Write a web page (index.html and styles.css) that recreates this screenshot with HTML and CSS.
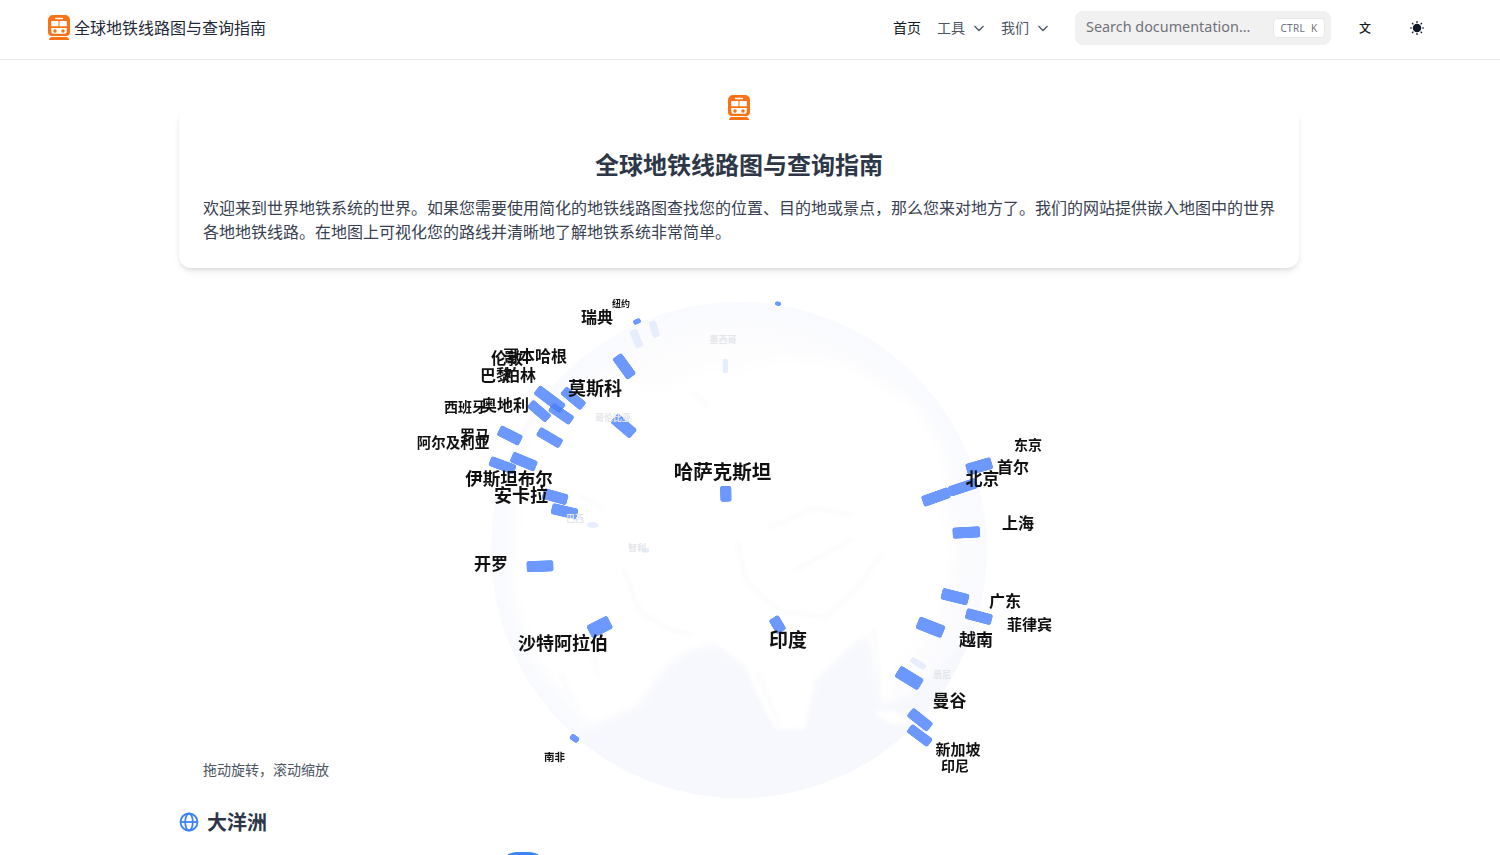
FILE: index.html
```html
<!DOCTYPE html>
<html lang="zh-CN">
<head>
<meta charset="utf-8">
<title>全球地铁线路图与查询指南</title>
<link rel="stylesheet" href="styles.css">
</head>
<body>
<svg class="defs" width="0" height="0" aria-hidden="true">
  <symbol id="train" viewBox="0 0 22 25">
    <path fill="#f97316" d="M5 0h12a5 5 0 0 1 5 5v12a4 4 0 0 1-4 4H4a4 4 0 0 1-4-4V5a5 5 0 0 1 5-5zM3 22h16l2 2v1H1v-1z"/>
    <path fill="#fff" d="M7 2.800h8v1.400H7zM3.200 6h7.300v5.200H3.200zM11.500 6h7.300v5.200h-7.300zM3.200 13h15.600v3.800a2 2 0 0 1-2 2H5.200a2 2 0 0 1-2-2z"/>
    <circle cx="7" cy="16" r="1.700" fill="#f97316"/>
    <circle cx="15" cy="16" r="1.700" fill="#f97316"/>
  </symbol>
</svg>

<header class="topbar">
  <a class="brand">
    <svg class="train"><use href="#train"/></svg>
    <span class="brand-name">全球地铁线路图与查询指南</span>
  </a>
  <div class="topbar-right">
    <nav class="nav">
      <a class="nav-link nav-active">首页</a>
      <a class="nav-link">工具<svg class="chev" viewBox="0 0 12 12"><path d="M1.500 4l4.500 4.500L10.500 4"/></svg></a>
      <a class="nav-link">我们<svg class="chev" viewBox="0 0 12 12"><path d="M1.500 4l4.500 4.500L10.500 4"/></svg></a>
    </nav>
    <div class="search">
      <span class="search-text">Search documentation...</span>
      <kbd class="kbd">CTRL<span class="kbd-k">K</span></kbd>
    </div>
    <button class="icon-btn lang">文</button>
    <button class="icon-btn">
      <svg class="sun" viewBox="0 0 16 16">
        <circle cx="8" cy="8" r="3.600"/>
        <path d="M8 1v2M8 13v2M1 8h2M13 8h2M3 3l1.400 1.400M11.600 11.600L13 13M3 13l1.400-1.400M11.600 4.400L13 3"/>
      </svg>
    </button>
  </div>
</header>

<main class="main">
  <section class="hero">
    <svg class="train hero-icon"><use href="#train"/></svg>
    <h1 class="hero-title">全球地铁线路图与查询指南</h1>
    <p class="hero-text">欢迎来到世界地铁系统的世界。如果您需要使用简化的地铁线路图查找您的位置、目的地或景点，那么您来对地方了。我们的网站提供嵌入地图中的世界各地地铁线路。在地图上可视化您的路线并清晰地了解地铁系统非常简单。</p>
  </section>

  <section class="stage">
    <svg class="globe" viewBox="179 268 1120 530" width="1120" height="530">
      <defs>
        <clipPath id="disc"><circle cx="739" cy="550" r="248"/></clipPath>
        <radialGradient id="rim" cx="50%" cy="50%" r="50%">
          <stop offset="0.820" stop-color="#fdfdfe"/>
          <stop offset="1" stop-color="#f9fafe"/>
        </radialGradient>
        <filter id="soft" x="-10%" y="-10%" width="120%" height="120%"><feGaussianBlur stdDeviation="18"/></filter>
        <filter id="edge" x="-10%" y="-10%" width="120%" height="120%"><feGaussianBlur stdDeviation="7"/></filter>
        <filter id="softer" x="-10%" y="-10%" width="120%" height="120%"><feGaussianBlur stdDeviation="6"/></filter>
        <filter id="round" filterUnits="userSpaceOnUse" x="179" y="268" width="1120" height="530">
          <feGaussianBlur stdDeviation="1.300"/>
          <feComponentTransfer><feFuncA type="linear" slope="5" intercept="-1.800"/></feComponentTransfer>
        </filter>
      </defs>

      <circle cx="739" cy="550" r="248" fill="url(#rim)"/>
      <g clip-path="url(#disc)">
        <g transform="translate(480 295) scale(.3333)">
          <path class="ocean" filter="url(#edge)" d="M330 1290L470 1230L540 1130L600 1075L700 1040L810 1110L850 1190L900 1290L960 1295L1000 1150L1130 1030L1170 1020L1210 1230L1290 1200L1340 1150L1500 1000L1500 1540L100 1540z"/>
          <path class="land" filter="url(#soft)" d="M150 400L260 290L420 240L530 290L690 210L760 230L900 190L1100 210L1300 330L1390 470L1400 560L1380 650L1420 760L1400 900L1350 1000L1280 1090L1240 1130L1210 1230L1170 1020L1130 1030L1000 1150L960 1290L900 1290L850 1190L810 1110L700 1040L600 1075L540 1130L470 1230L330 1290L290 1230L170 1100L100 900L110 650L120 500z"/>
          <path class="land" filter="url(#edge)" d="M330 1270L470 1215L530 1120L600 1065L700 1030L800 1110L830 1190L885 1300L975 1300L1000 1150L1130 1020L1170 1010L1210 1220L1240 1120L1200 800L700 700L300 900z"/>
          <path class="land" filter="url(#edge)" d="M1180 1250L1240 1245L1295 1285L1240 1290z"/>
          <g class="relief" filter="url(#softer)">
            <path d="M770 740L800 860L900 950L1040 965L1130 880L1210 770"/>
            <path d="M430 820L480 950L560 1000L640 1020"/>
            <path d="M340 1080L355 1140M830 1130L900 1290M1436 820L1438 850"/>
            <path d="M860 700L1000 640L1120 660M940 830L1120 730M300 600L370 640"/>
            <path d="M690 340L640 290M1180 1000L1200 1180M240 1130L280 1220"/>
          </g>
        </g>
      </g>

      <g class="routes">
        <line x1="652" y1="321" x2="656.700" y2="337" class="ghost" stroke-width="7"/>
        <line x1="633" y1="330" x2="640" y2="347" class="ghost" stroke-width="8"/>
        <line x1="725.300" y1="359" x2="725.300" y2="373.300" class="ghost" stroke-width="5"/>
        <line x1="911" y1="659" x2="925" y2="667.700" class="ghost" stroke-width="6"/>
        <ellipse cx="592.700" cy="525" rx="6" ry="3" class="ghost-fill"/>
        <ellipse cx="645.300" cy="550.300" rx="4" ry="2.500" class="ghost-fill"/>

        <line x1="633.500" y1="323" x2="640.500" y2="320" stroke-width="5"/>
        <line x1="775" y1="303.300" x2="781" y2="304" stroke-width="4"/>
        <line x1="616.700" y1="356" x2="631.700" y2="376.700" stroke-width="11"/>
        <line x1="563.300" y1="390" x2="583.300" y2="406.700" stroke-width="10"/>
        <line x1="536.700" y1="389.300" x2="562.700" y2="409" stroke-width="11"/>
        <line x1="550.700" y1="406.700" x2="571.700" y2="421" stroke-width="10"/>
        <line x1="530" y1="403.300" x2="548.300" y2="419" stroke-width="10"/>
        <line x1="614" y1="417.700" x2="633.300" y2="434.300" stroke-width="12"/>
        <line x1="499" y1="430" x2="520.700" y2="441" stroke-width="11"/>
        <line x1="538.300" y1="431" x2="561" y2="444.300" stroke-width="10"/>
        <line x1="511.700" y1="456.700" x2="536" y2="466.700" stroke-width="11"/>
        <line x1="490" y1="460.700" x2="515" y2="470" stroke-width="10"/>
        <line x1="543" y1="493.300" x2="567.300" y2="500" stroke-width="11"/>
        <line x1="551.700" y1="508.300" x2="577.300" y2="514.300" stroke-width="11"/>
        <line x1="725.700" y1="486" x2="726" y2="501.700" stroke-width="11"/>
        <line x1="526.700" y1="566.700" x2="553.300" y2="565.700" stroke-width="11"/>
        <line x1="589.300" y1="632.300" x2="610" y2="621.700" stroke-width="14"/>
        <line x1="773.300" y1="617.700" x2="781.700" y2="631.700" stroke-width="11"/>
        <line x1="570.700" y1="735.700" x2="578.300" y2="741" stroke-width="6"/>
        <line x1="966.700" y1="470" x2="991.700" y2="462.700" stroke-width="12"/>
        <line x1="949.300" y1="491.700" x2="976.700" y2="482.700" stroke-width="10.500"/>
        <line x1="922.700" y1="501.700" x2="949.300" y2="492.300" stroke-width="11"/>
        <line x1="952.700" y1="533.300" x2="980" y2="531.700" stroke-width="11"/>
        <line x1="941.700" y1="593.300" x2="968.300" y2="600" stroke-width="11.500"/>
        <line x1="966" y1="613.300" x2="991.700" y2="620" stroke-width="11"/>
        <line x1="917.700" y1="622.300" x2="943.300" y2="632.300" stroke-width="13"/>
        <line x1="897.700" y1="671" x2="920.700" y2="685" stroke-width="13"/>
        <line x1="910" y1="711.700" x2="930" y2="727.700" stroke-width="11"/>
        <line x1="909.300" y1="727.700" x2="930" y2="743.300" stroke-width="10"/>
      </g>

      <g class="faint-labels">
        <text x="723" y="339">墨西哥</text>
        <text x="613" y="417">哥伦比亚</text>
        <text x="575" y="518">巴西</text>
        <text x="637" y="547">智利</text>
        <text x="942" y="674">悉尼</text>
      </g>

      <g class="labels" transform="translate(0 -2)">
        <text x="621" y="305" font-size="9">纽约</text>
        <text x="597" y="318" font-size="16">瑞典</text>
        <text x="507" y="359" font-size="16">伦敦</text>
        <text x="535" y="357" font-size="16">哥本哈根</text>
        <text x="496" y="376" font-size="16">巴黎</text>
        <text x="520" y="376" font-size="16">柏林</text>
        <text x="465" y="408" font-size="14">西班牙</text>
        <text x="505" y="406" font-size="16">奥地利</text>
        <text x="475" y="436" font-size="15">罗马</text>
        <text x="453" y="443" font-size="14.500">阿尔及利亚</text>
        <text x="595" y="389" font-size="18">莫斯科</text>
        <text x="509" y="479" font-size="17.500">伊斯坦布尔</text>
        <text x="521" y="496" font-size="18">安卡拉</text>
        <text x="722.500" y="472" font-size="19.500">哈萨克斯坦</text>
        <text x="491" y="564" font-size="17">开罗</text>
        <text x="563" y="644" font-size="18">沙特阿拉伯</text>
        <text x="788" y="640" font-size="19">印度</text>
        <text x="554.500" y="758" font-size="10.500">南非</text>
        <text x="1028" y="446" font-size="14">东京</text>
        <text x="1013" y="468" font-size="16">首尔</text>
        <text x="982.500" y="479" font-size="17">北京</text>
        <text x="1018" y="524" font-size="16">上海</text>
        <text x="1005" y="602" font-size="16">广东</text>
        <text x="1029.500" y="625" font-size="15">菲律宾</text>
        <text x="976" y="640" font-size="17">越南</text>
        <text x="949.500" y="701" font-size="17">曼谷</text>
        <text x="958" y="750" font-size="15">新加坡</text>
        <text x="955" y="767" font-size="14">印尼</text>
      </g>
    </svg>
    <p class="hint">拖动旋转，滚动缩放</p>
  </section>

  <h2 class="section-title">
    <svg class="globe-icon" viewBox="0 0 20 20">
      <circle cx="10" cy="10" r="8.500"/>
      <ellipse cx="10" cy="10" rx="3.800" ry="8.500"/>
      <path d="M1.500 10h17"/>
    </svg>
    <span class="section-name">大洋洲</span>
  </h2>
  <div class="peek"></div>
</main>
</body>
</html>
```
FILE: styles.css
```css
* { box-sizing: border-box; }
html, body { margin: 0; padding: 0; }
body {
  height: 100vh;
  overflow: hidden;
  background: #fff;
  color: #111827;
  font-family: "Noto Sans", "Noto Sans CJK SC", sans-serif;
}
.defs { position: absolute; }

.topbar {
  height: 60px;
  display: flex;
  align-items: center;
  justify-content: space-between;
  padding: 0 65px 4px 48px;
  border-bottom: 1px solid #e5e7eb;
}
.brand {
  display: flex;
  align-items: center;
  gap: 4px;
  font-size: 16px;
  color: #1f2937;
}
.brand-name { padding-bottom: 2px; }
.train { width: 22px; height: 25px; display: block; }
.topbar-right { display: flex; align-items: center; }
.nav { display: flex; align-items: center; gap: 16px; margin-right: 26px; }
.nav-link {
  display: flex;
  align-items: center;
  gap: 8px;
  font-size: 14px;
  color: #4b5563;
  padding-bottom: 2px;
}
.nav-active { color: #111827; }
.chev { width: 12px; height: 12px; margin-top: 2px; fill: none; stroke: #4b5563; stroke-width: 1.300; }
.search {
  width: 256px;
  height: 34px;
  display: flex;
  align-items: center;
  justify-content: space-between;
  padding: 0 6px 0 11px;
  border-radius: 8px;
  background: #f1f1f2;
  margin-right: 16px;
}
.search-text { font-size: 14.400px; color: #71717a; padding-bottom: 3px; }
.kbd {
  display: flex;
  gap: 6px;
  align-items: center;
  height: 20px;
  padding: 0 6.500px;
  border: 1px solid #e5e7eb;
  border-radius: 4px;
  background: #fff;
  font-family: "Noto Sans", sans-serif;
  font-size: 10px;
  color: #6b7280;
  letter-spacing: .3px;
}
.kbd-k { color: #78716c; }
.icon-btn {
  width: 36px;
  height: 36px;
  padding: 0;
  border: 0;
  background: none;
  display: flex;
  align-items: center;
  justify-content: center;
  color: #111827;
  font-family: inherit;
}
.lang { font-size: 12px; margin-right: 16px; font-weight: 500; }
.sun { width: 16px; height: 16px; fill: #111827; stroke: #111827; stroke-width: 1.200; }

.main { width: 1120px; margin: 48px 0 0 179px; }
.hero {
  position: relative;
  height: 160px;
  padding: 41px 24px 24px;
  border-radius: 12px;
  background: #fff;
  box-shadow: 0 4px 6px -1px rgba(0, 0, 0, .1), 0 2px 4px -2px rgba(0, 0, 0, .1);
}
.hero-icon { position: absolute; top: -13px; left: 549px; }
.hero-title {
  margin: 0 0 15px;
  text-align: center;
  font-size: 24px;
  line-height: 32px;
  font-weight: 700;
  color: #2d3748;
}
.hero-text {
  margin: 0;
  font-size: 16px;
  line-height: 24px;
  color: #374151;
}

.stage { position: relative; height: 540px; }
.globe { display: block; }
.land { fill: #fff; }
.ocean { fill: #f7f8fd; }
.relief { fill: none; stroke: #f8f9fa; stroke-width: 9; }
.routes line { stroke: #4a80ff; opacity: .8; filter: url(#round); }
.routes line.ghost { stroke: #e6edfc; opacity: 1; }
.ghost-fill { fill: #e6edfc; }
.labels text {
  text-anchor: middle;
  dominant-baseline: central;
  font-family: "Noto Sans CJK SC", sans-serif;
  font-weight: 700;
  fill: #111;
}
.labels { filter: blur(.3px); }
.faint-labels text {
  text-anchor: middle;
  dominant-baseline: central;
  font-family: "Noto Sans CJK SC", sans-serif;
  font-size: 9px;
  font-weight: 700;
  fill: #e4e6ea;
}
.hint {
  position: absolute;
  left: 24px;
  top: 492px;
  margin: 0;
  font-size: 14px;
  line-height: 20px;
  color: #4b5563;
}

.section-title {
  display: flex;
  align-items: center;
  gap: 8px;
  margin: 0;
  height: 28px;
  font-size: 20px;
  font-weight: 700;
  color: #2d3748;
}
.section-name { padding-bottom: 2px; }
.globe-icon { width: 20px; height: 20px; fill: none; stroke: #3b82f6; stroke-width: 1.800; }
.peek {
  width: 32px;
  height: 8px;
  margin: 16px 0 0 328px;
  background: #3b82f6;
  border-radius: 12px 12px 0 0 / 4px 4px 0 0;
}
```
